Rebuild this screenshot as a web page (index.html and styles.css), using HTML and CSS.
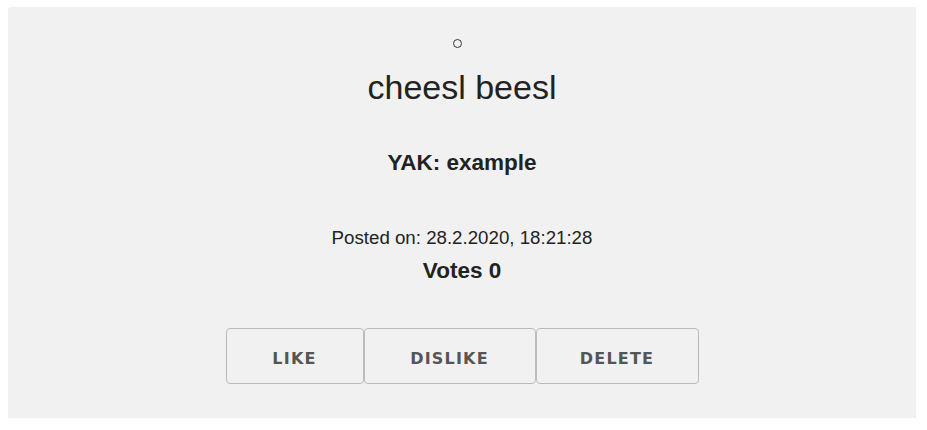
FILE: index.html
```html
<!DOCTYPE html>
<html>
<head>
<meta charset="utf-8">
<link rel="stylesheet" href="styles.css">
<title>Yak</title>
</head>
<body>
<div class="card">
  <span class="dot"></span>
  <h1 class="title">cheesl beesl</h1>
  <h3 class="yak">YAK: example</h3>
  <p class="posted">Posted on: 28.2.2020, 18:21:28</p>
  <h3 class="votes">Votes 0</h3>
  <div class="actions">
    <button class="btn btn-like">LIKE</button>
    <button class="btn btn-dislike">DISLIKE</button>
    <button class="btn btn-delete">DELETE</button>
  </div>
</div>
</body>
</html>
```
FILE: styles.css
```css
html, body {
  background: #ffffff;
}
body {
  margin: 7px 11px 8px 8px;
  font-family: "Liberation Sans", Arial, sans-serif;
  color: #222222;
}
.card {
  background: #f1f1f1;
  border-radius: 3px;
  box-shadow: 1px 1px 2px rgba(0, 0, 0, 0.12);
  height: 411px;
  box-sizing: border-box;
  padding-top: 32px;
  display: flex;
  flex-direction: column;
  align-items: center;
}
.dot {
  width: 7px;
  height: 7px;
  border: 1px solid #333333;
  border-radius: 50%;
  margin-right: 10px;
}
.title {
  margin: 19px 0 0 0;
  font-size: 34px;
  line-height: 40px;
  font-weight: normal;
}
.yak {
  margin: 43px 0 0 0;
  font-size: 22.5px;
  line-height: 26px;
  font-weight: bold;
}
.posted {
  margin: 51px 0 0 0;
  font-size: 18.7px;
  line-height: 22px;
}
.votes {
  margin: 9px 0 0 0;
  font-size: 22.5px;
  line-height: 26px;
  font-weight: bold;
}
.actions {
  margin-top: 44px;
  display: flex;
}
.btn {
  height: 56px;
  box-sizing: border-box;
  padding: 5px 0 0 0;
  background: transparent;
  border: 1px solid #bbbbbb;
  border-radius: 4px;
  font-family: "DejaVu Sans", sans-serif;
  font-weight: bold;
  font-size: 16px;
  letter-spacing: 1.2px;
  color: #555555;
}
.btn-like { width: 138px; }
.btn-dislike { width: 172px; }
.btn-delete { width: 163px; }
```
